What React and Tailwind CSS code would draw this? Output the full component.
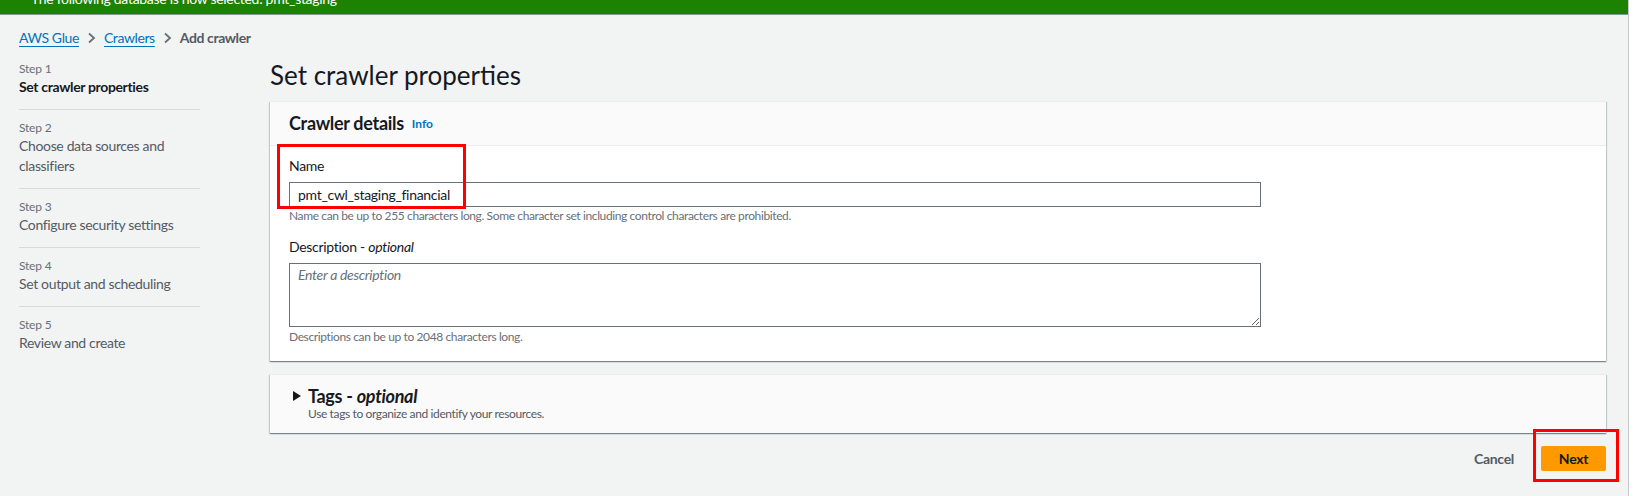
const steps = [
  { label: "Step 1", lines: ["Set crawler properties"], active: true },
  { label: "Step 2", lines: ["Choose data sources and", "classifiers"] },
  { label: "Step 3", lines: ["Configure security settings"] },
  { label: "Step 4", lines: ["Set output and scheduling"] },
  { label: "Step 5", lines: ["Review and create"] },
];

function Chevron() {
  return (
    <svg className="w-[9px] h-[12px] mx-[8px]" viewBox="0 0 9 12" fill="none">
      <path d="M2 1.5l5 4.5-5 4.5" stroke="#687078" strokeWidth="1.8" />
    </svg>
  );
}

export default function App() {
  return (
    <div
      className="relative flex h-[496px] w-full overflow-hidden bg-white text-[#16191f]"
      style={{ fontFamily: "Lato, 'Noto Sans', Arial, sans-serif" }}
    >
      <div className="flex w-[1629px] flex-col border-r border-[#c6cbcb] bg-[#f2f3f3]">
        {/* ===== flash banner (cut off at top) ===== */}
        <div className="h-[15px] overflow-hidden border-b border-[#879596] bg-[#1d8102]">
          <p className="-mt-[11px] pl-[31px] text-[14px] leading-[20px] tracking-[-0.3px] text-white">
            The following database is now selected: pmt_staging
          </p>
        </div>

        {/* ===== breadcrumb ===== */}
        <nav className="mt-[13px] flex items-center pl-[19px] text-[14px] leading-[20px] tracking-[-0.4px]">
          <a className="text-[#0073bb] underline underline-offset-[3px]">AWS Glue</a>
          <Chevron />
          <a className="text-[#0073bb] underline underline-offset-[3px]">Crawlers</a>
          <Chevron />
          <span className="font-bold text-[#545b64]">Add crawler</span>
        </nav>

        <div className="mt-[13px] flex pl-[19px] pr-[22px]">
          {/* ===== wizard steps ===== */}
          <ul className="w-[181px] shrink-0">
            {steps.map((s, i) => (
              <li
                key={s.label}
                className={`${i === 0 ? "" : "pt-[10px]"} ${
                  i === steps.length - 1 ? "" : "border-b border-[#d5dbdb] pb-[12px]"
                }`}
              >
                <p className="text-[12px] leading-[16px] tracking-[-0.2px] text-[#687078]">{s.label}</p>
                {s.lines.map((l) => (
                  <p
                    key={l}
                    className={`text-[14px] leading-[20px] tracking-[-0.35px] ${
                      s.active ? "font-bold text-[#16191f]" : "text-[#545b64]"
                    }`}
                  >
                    {l}
                  </p>
                ))}
              </li>
            ))}
          </ul>

          {/* ===== main form ===== */}
          <main className="ml-[70px] flex-1">
            <h1 className="-mt-[2px] text-[26px] leading-[32px] font-normal">Set crawler properties</h1>

            <section className="mt-[10px] border-t border-[#eaeded] bg-white shadow-[0_1px_1px_0_rgba(0,28,36,0.3),1px_1px_1px_0_rgba(0,28,36,0.15),-1px_1px_1px_0_rgba(0,28,36,0.15)]">
              <header className="flex h-[44px] items-center gap-[8px] border-b border-[#eaeded] bg-[#fafafa] px-[19px]">
                <h2 className="-mt-[2px] text-[18px] font-bold leading-[22px] tracking-[-0.3px]">Crawler details</h2>
                <a className="mt-[1px] text-[12px] font-bold text-[#0073bb]">Info</a>
              </header>

              <div className="px-[19px] pt-[10px] pb-[16px]">
                <label className="block text-[14px] leading-[20px] tracking-[-0.3px]">Name</label>
                <input
                  readOnly
                  value="pmt_cwl_staging_financial"
                  className="mt-[6px] block h-[25px] w-[972px] border border-[#687078] bg-white px-[8px] text-[14px] tracking-[-0.3px] text-[#16191f] outline-none"
                />
                <p className="mt-[1px] text-[12px] leading-[16px] tracking-[-0.38px] text-[#687078]">
                  Name can be up to 255 characters long. Some character set including control characters are prohibited.
                </p>

                <label className="mt-[13px] block text-[14px] leading-[20px] tracking-[-0.3px]">
                  Description - <i>optional</i>
                </label>
                <textarea
                  placeholder="Enter a description"
                  className="mt-[6px] block h-[64px] w-[972px] border border-[#687078] bg-white px-[8px] py-[1px] text-[14px] leading-[20px] tracking-[-0.3px] outline-none placeholder:italic placeholder:text-[#687078]"
                />
                <p className="mt-[2px] text-[12px] leading-[16px] tracking-[-0.38px] text-[#687078]">
                  Descriptions can be up to 2048 characters long.
                </p>
              </div>
            </section>

            <section className="mt-[13px] border-t border-[#eaeded] bg-[#fafafa] pt-[11px] pb-[11px] pl-[23px] shadow-[0_1px_1px_0_rgba(0,28,36,0.3),1px_1px_1px_0_rgba(0,28,36,0.15),-1px_1px_1px_0_rgba(0,28,36,0.15)]">
              <div className="flex items-center">
                <svg className="mr-[7px] h-[10px] w-[8px]" viewBox="0 0 8 10">
                  <path d="M0 0L8 5L0 10Z" fill="#16191f" />
                </svg>
                <h2 className="text-[18px] font-bold leading-[20px] tracking-[-0.3px]">
                  Tags - <i>optional</i>
                </h2>
              </div>
              <p className="pl-[15px] text-[12px] leading-[16px] tracking-[-0.38px] text-[#545b64]">
                Use tags to organize and identify your resources.
              </p>
            </section>

            <div className="mt-[13px] flex items-center justify-end">
              <button className="mr-[27px] text-[14px] font-bold tracking-[-0.3px] text-[#545b64]">Cancel</button>
              <button className="h-[25px] w-[65px] rounded-[2px] bg-[#ff9900] text-[14px] font-bold tracking-[-0.3px] text-[#16191f]">
                Next
              </button>
            </div>
          </main>
        </div>
      </div>

      {/* ===== red annotation boxes ===== */}
      <div className="pointer-events-none absolute left-[277px] top-[144px] h-[65px] w-[189px] border-[3px] border-[#ff0000]" />
      <div className="pointer-events-none absolute left-[1533px] top-[429px] h-[53px] w-[86px] border-[3px] border-[#ff0000]" />
    </div>
  );
}
